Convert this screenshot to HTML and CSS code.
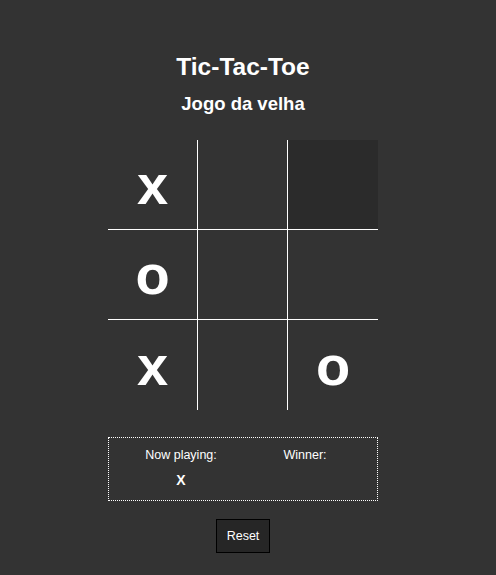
FILE: index.html
```html
<!DOCTYPE html>
<html lang="pt">
<head>
<meta charset="utf-8">
<title>Tic-Tac-Toe</title>
<link rel="stylesheet" href="styles.css">
</head>
<body>
<main class="app">
  <h1 class="title">Tic-Tac-Toe</h1>
  <h2 class="subtitle">Jogo da velha</h2>
  <div class="board">
    <div class="cell">x</div>
    <div class="cell"></div>
    <div class="cell cell-hover"></div>
    <div class="cell">o</div>
    <div class="cell"></div>
    <div class="cell"></div>
    <div class="cell">x</div>
    <div class="cell"></div>
    <div class="cell">o</div>
  </div>
  <div class="status">
    <div class="status-col">
      <div class="status-label">Now playing:</div>
      <div class="status-value">X</div>
    </div>
    <div class="status-col">
      <div class="status-label">Winner:</div>
      <div class="status-value"></div>
    </div>
  </div>
  <button class="reset" type="button">Reset</button>
</main>
</body>
</html>
```

FILE: styles.css
```css
html, body {
  margin: 0;
  padding: 0;
  background: #333333;
  color: #ffffff;
  font-family: "Liberation Sans", Arial, sans-serif;
}

.app {
  width: 486px;
  display: flex;
  flex-direction: column;
  align-items: center;
}

.title {
  margin: 52px 0 0;
  font-size: 24.5px;
  line-height: 30px;
  font-weight: bold;
}

.subtitle {
  margin: 11px 0 0;
  font-size: 18.5px;
  line-height: 21px;
  font-weight: bold;
}

.board {
  margin-top: 26px;
  display: grid;
  grid-template-columns: repeat(3, 90px);
  grid-template-rows: repeat(3, 90px);
}

.cell {
  box-sizing: border-box;
  display: flex;
  align-items: center;
  justify-content: center;
  font-size: 56px;
  font-weight: bold;
  line-height: normal;
  color: #ffffff;
}

.cell:nth-child(3n+1),
.cell:nth-child(3n+2) {
  border-right: 1px solid #ffffff;
}

.cell:nth-child(-n+6) {
  border-bottom: 1px solid #ffffff;
}

.cell-hover {
  background: #2b2b2b;
}

.status {
  box-sizing: border-box;
  margin-top: 27px;
  width: 270px;
  border: 1px dotted #ffffff;
  padding: 10px 10px 12px;
  display: grid;
  grid-template-columns: 1fr 1fr;
  text-align: center;
}

.status-label {
  font-size: 12.5px;
  line-height: 14px;
}

.status-value {
  margin-top: 10px;
  font-size: 14px;
  line-height: 16px;
  font-weight: bold;
  min-height: 16px;
}

.reset {
  margin-top: 18px;
  padding: 9px 9.5px;
  background: #262626;
  color: #ffffff;
  border: 1px solid #000000;
  border-radius: 0;
  font-family: "Liberation Sans", Arial, sans-serif;
  font-size: 12.5px;
  line-height: 14px;
}
```
